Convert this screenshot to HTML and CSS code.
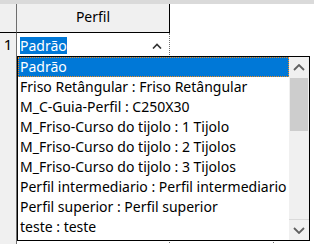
FILE: index.html
```
<!DOCTYPE html>
<html lang="pt">
<head>
    <meta charset="UTF-8">
    <title>Perfil</title>
    <link rel="stylesheet" href="styles.css">
</head>
<body>
    <div class="sheet">
        <div class="row head">
            <div class="rowhead"></div>
            <div class="cell col-title">Perfil</div>
            <div class="rest"></div>
        </div>
        <div class="row edit">
            <div class="rowhead">1</div>
            <div class="cell editor">
                <span class="sel">Padrão</span>
                <svg class="chev" width="10" height="6" viewBox="0 0 10 6"><path d="M1 5.5 L5 1.5 L9 5.5" fill="none" stroke="#333" stroke-width="1.6"/></svg>
            </div>
            <div class="rest"></div>
        </div>
        <div class="row blank">
            <div class="rowhead"></div>
            <div class="cell"></div>
            <div class="rest"></div>
        </div>

        <div class="dropdown">
            <ul class="items">
                <li class="active">Padrão</li>
                <li>Friso Retângular : Friso Retângular</li>
                <li>M_C-Guia-Perfil : C250X30</li>
                <li>M_Friso-Curso do tijolo : 1 Tijolo</li>
                <li>M_Friso-Curso do tijolo : 2 Tijolos</li>
                <li>M_Friso-Curso do tijolo : 3 Tijolos</li>
                <li>Perfil intermediario : Perfil intermediario</li>
                <li>Perfil superior : Perfil superior</li>
                <li>teste : teste</li>
            </ul>
            <div class="scrollbar">
                <div class="arrow">
                    <svg width="12" height="7" viewBox="0 0 12 7"><path d="M1 6 L6 1 L11 6" fill="none" stroke="#606060" stroke-width="1.8"/></svg>
                </div>
                <div class="thumb"></div>
                <div class="track"></div>
                <div class="arrow down">
                    <svg width="12" height="7" viewBox="0 0 12 7"><path d="M1 1 L6 6 L11 1" fill="none" stroke="#606060" stroke-width="1.8"/></svg>
                </div>
            </div>
        </div>
    </div>
</body>
</html>
```

FILE: styles.css
```
* {
    margin: 0;
    padding: 0;
    box-sizing: border-box;
}

body {
    background: #fff;
    font-family: "Noto Sans", "Open Sans", sans-serif;
    font-size: 14px;
    color: #000;
}

.sheet {
    position: relative;
    width: 314px;
    height: 244px;
    overflow: hidden;
}

.row {
    display: flex;
}

.rowhead {
    width: 17px;
    flex: none;
    background: #f0f0f0;
    border-right: 1px solid #6e6e6e;
    text-align: center;
}

.cell {
    width: 153px;
    flex: none;
    border-right: 1px dotted #6e6e6e;
}

.rest {
    flex: 1;
}

.head {
    height: 33px;
    border-top: 4px solid #dadada;
}

.head .cell {
    background: #f0f0f0;
    border-right: 1px solid #000;
    border-bottom: 1px solid #000;
    text-align: center;
    line-height: 26px;
}

.head .rowhead {
    border-bottom: 1px solid #000;
}

.edit {
    height: 24px;
}

.edit .rowhead {
    font-size: 15px;
    line-height: 22px;
}

.editor {
    display: flex;
    align-items: center;
    justify-content: space-between;
    padding: 0 7px 0 3px;
}

.sel {
    background: #0078d7;
    color: #fff;
    line-height: 17px;
}

.chev {
    margin-top: 2px;
}

.blank {
    height: 200px;
}

.blank .rest {
    border-right: 1px dotted #6e6e6e;
    margin-right: 40px;
}

.dropdown {
    position: absolute;
    left: 17px;
    top: 56px;
    width: 293px;
    height: 185px;
    background: #fff;
    border: 1px solid #000;
    display: flex;
}

.items {
    list-style: none;
    flex: 1;
    padding: 0;
}

.items li {
    height: 20px;
    line-height: 20px;
    padding-left: 2px;
    white-space: nowrap;
}

.items li.active {
    background: #0078d7;
    color: #fff;
    outline: 1px dotted #f08c1e;
    outline-offset: -1px;
}

.scrollbar {
    width: 20px;
    flex: none;
    background: #f0f0f0;
    display: flex;
    flex-direction: column;
}

.arrow {
    height: 21px;
    display: flex;
    align-items: center;
    justify-content: center;
}

.arrow.down {
    border-top: 1px solid #dadada;
}

.thumb {
    height: 53px;
    margin: 0 1px;
    background: #cdcdcd;
}

.track {
    flex: 1;
}
```
